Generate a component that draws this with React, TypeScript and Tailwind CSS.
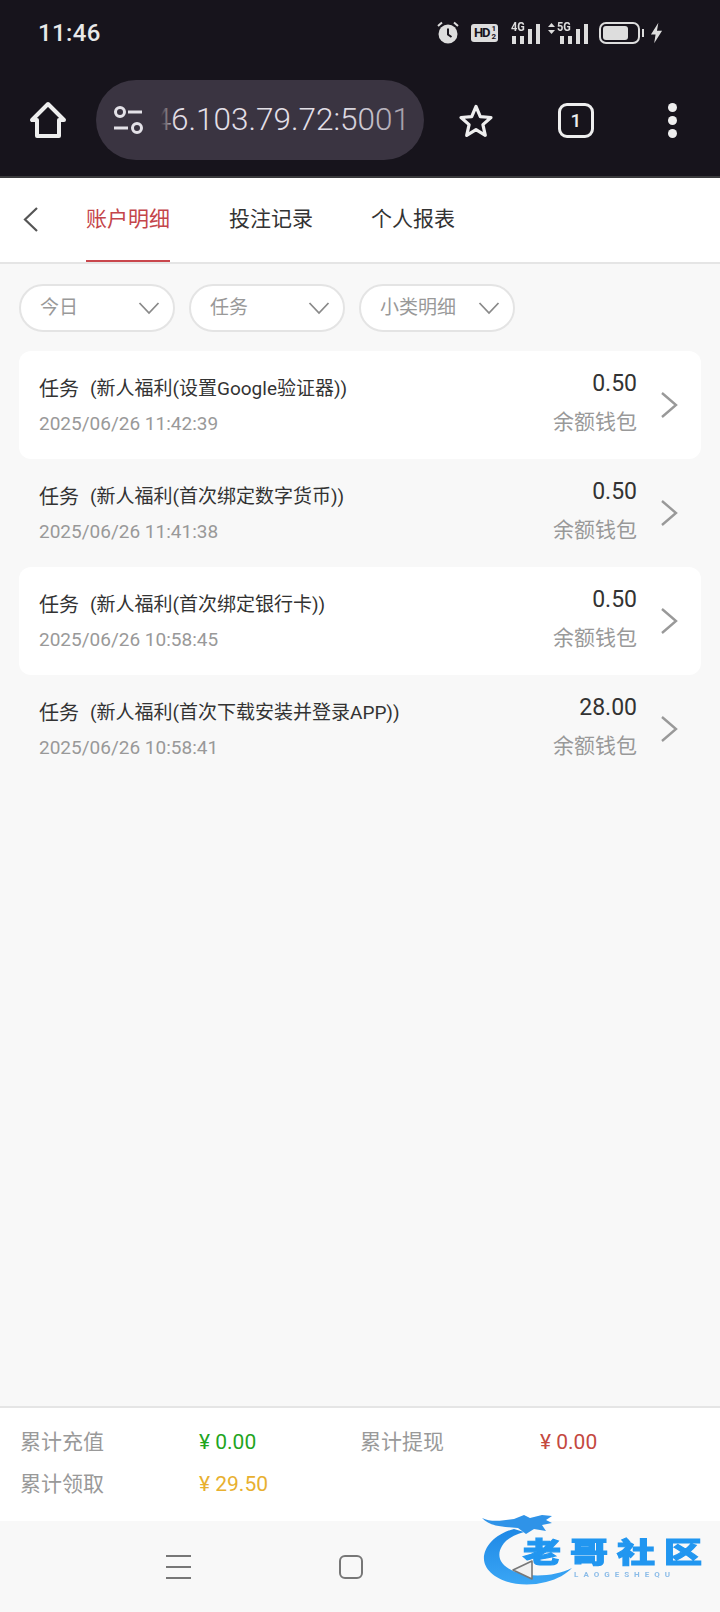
const rows = [
  { sub: "(新人福利(设置Google验证器))", time: "2025/06/26 11:42:39", amount: "0.50", white: true },
  { sub: "(新人福利(首次绑定数字货币))", time: "2025/06/26 11:41:38", amount: "0.50", white: false },
  { sub: "(新人福利(首次绑定银行卡))", time: "2025/06/26 10:58:45", amount: "0.50", white: true },
  { sub: "(新人福利(首次下载安装并登录APP))", time: "2025/06/26 10:58:41", amount: "28.00", white: false },
];

function Signal({ label, arrows }: { label: string; arrows?: boolean }) {
  return (
    <div className={`relative flex h-[32px] items-end gap-[4px] pb-[5px] ${arrows ? "pl-[12px]" : "pl-[1px]"}`}>
      {arrows && (
        <svg width="7" height="11" viewBox="0 0 7 11" className="absolute left-0 top-[6px]">
          <path d="M3.5 0L7 4H0ZM0 7H7L3.5 11Z" fill="#ddd" />
        </svg>
      )}
      <span className={`absolute top-[3px] origin-left scale-x-[0.85] text-[13px] font-bold leading-[13px] text-[#ddd] ${arrows ? "left-[9px]" : "left-0"}`}>
        {label}
      </span>
      <span className="h-[8px] w-[4px] bg-[#ddd]" />
      <span className="h-[8px] w-[4px] bg-[#ddd]" />
      <span className="h-[15px] w-[4px] bg-[#ddd]" />
      <span className="h-[20px] w-[4px] bg-[#ddd]" />
    </div>
  );
}

function StatusBar() {
  return (
    <div className="flex h-[64px] items-center justify-between pl-[38px] pr-[57px] pt-[1px] text-[#e8e8e8]">
      <span className="text-[24px] font-medium leading-none tracking-[0.4px]">11:46</span>
      <div className="flex items-center">
        <svg width="22" height="23" viewBox="0 0 22 23" className="mr-[12px]">
          <circle cx="11" cy="13" r="9.5" fill="#ddd" />
          <path d="M11 7.5V13.5L14.5 16" stroke="#17141c" strokeWidth="2" fill="none" />
          <path d="M1 5L5 1.5M21 5L17 1.5" stroke="#ddd" strokeWidth="2" />
        </svg>
        <div className="mr-[13px] flex h-[18px] w-[27px] items-center justify-center rounded-[3px] bg-[#ddd] pl-[1px] text-[13px] font-bold leading-none tracking-[-1px] text-[#17141c]">
          HD
          <span className="ml-[2px] flex flex-col text-[8px] leading-[8px] tracking-normal">
            <span>1</span>
            <span>2</span>
          </span>
        </div>
        <Signal label="4G" />
        <div className="w-[8px]" />
        <Signal label="5G" arrows />
        <div className="ml-[11px] flex h-[22px] w-[41px] items-center rounded-[7px] border-2 border-[#ddd] px-[2px]">
          <div className="h-[14px] w-[25px] rounded-[3px] bg-[#ddd]" />
        </div>
        <div className="ml-[2px] h-[8px] w-[2px] bg-[#ddd]" />
        <svg width="13" height="24" viewBox="0 0 14 24" className="ml-[6px]">
          <path d="M9 1L1 13.5H6L4.5 23L13 9.5H7.5Z" fill="#ddd" />
        </svg>
      </div>
    </div>
  );
}

function Toolbar() {
  return (
    <div className="flex h-[112px] items-start pt-[16px]">
      <div className="flex h-[80px] w-[96px] items-center justify-center">
        <svg width="38" height="38" viewBox="0 0 38 38" fill="none" stroke="#eee" strokeWidth="4" strokeLinejoin="round">
          <path d="M19 3L3 19H8V35H30V19H35Z" />
        </svg>
      </div>
      <div className="relative flex h-[80px] w-[328px] items-center overflow-hidden rounded-full bg-[#3a3441] pl-[17px]">
        <svg width="32" height="28" viewBox="0 0 32 28" fill="none" stroke="#e4e2e8" strokeWidth="3" className="shrink-0">
          <circle cx="7" cy="6" r="4.5" />
          <path d="M15 6H29M1 22H15" />
          <circle cx="24" cy="22" r="4.5" />
        </svg>
        <div className="relative ml-[16px] w-[249px] overflow-hidden">
          <div className="flex justify-end whitespace-nowrap text-[31.5px] font-light leading-[40px] text-[#e2dfe6]">
            46.103.79.72:5001
          </div>
          <div className="absolute inset-y-0 left-0 w-[14px] bg-gradient-to-r from-[#3a3441] to-transparent" />
          <div className="absolute inset-y-0 right-0 w-[70px] bg-gradient-to-l from-[#3a3441]/40 to-transparent" />
        </div>
      </div>
      <div className="flex h-[80px] w-[104px] items-center justify-center pt-[2px]">
        <svg width="36" height="36" viewBox="0 0 36 36" fill="none" stroke="#eee" strokeWidth="3.2" strokeLinejoin="round">
          <path d="M18 3.5L22.3 13.6L33 14.5L24.9 21.6L27.3 32.3L18 26.6L8.7 32.3L11.1 21.6L3 14.5L13.7 13.6Z" />
        </svg>
      </div>
      <div className="flex h-[80px] w-[96px] items-center justify-center">
        <div className="flex h-[35px] w-[36px] items-center justify-center rounded-[9px] border-[3px] border-[#eee] text-[19px] font-medium leading-none text-[#eee]">
          1
        </div>
      </div>
      <div className="flex h-[80px] w-[96px] flex-col items-center justify-center gap-[4px]">
        <span className="h-[9px] w-[9px] rounded-full bg-[#eee]" />
        <span className="h-[9px] w-[9px] rounded-full bg-[#eee]" />
        <span className="h-[9px] w-[9px] rounded-full bg-[#eee]" />
      </div>
    </div>
  );
}

function Tabs() {
  return (
    <div className="flex h-[86px] items-stretch border-b-2 border-[#e5e5e5] bg-white">
      <div className="flex w-[86px] items-center pb-[1px] pl-[22px]">
        <svg width="17" height="27" viewBox="0 0 17 27" fill="none" stroke="#555" strokeWidth="2.2">
          <path d="M15 2L3 13.5L15 25" />
        </svg>
      </div>
      <div className="relative flex w-[84px] items-center justify-center text-[21px] text-[#c4454a]">
        账户明细
        <div className="absolute bottom-0 left-0 h-[2px] w-full bg-[#c9474c]" />
      </div>
      <div className="ml-[59px] flex w-[84px] items-center justify-center text-[21px] text-[#333]">投注记录</div>
      <div className="ml-[58px] flex w-[84px] items-center justify-center text-[21px] text-[#333]">个人报表</div>
    </div>
  );
}

function Filter({ label }: { label: string }) {
  return (
    <div className="flex h-[48px] w-[156px] items-center justify-between rounded-full border-2 border-[#e4e4e4] bg-white pl-[19px] pr-[13px] text-[19px] text-[#999]">
      <span>{label}</span>
      <svg width="22" height="14" viewBox="0 0 22 14" fill="none" stroke="#8a8a8a" strokeWidth="1.8">
        <path d="M1.5 2L11 12L20.5 2" />
      </svg>
    </div>
  );
}

function Row({ sub, time, amount, white }: { sub: string; time: string; amount: string; white: boolean }) {
  return (
    <div className={`flex h-[108px] items-center rounded-[12px] pl-[20px] pr-[23px] ${white ? "bg-white" : ""}`}>
      <div className="flex-1">
        <div className="flex items-center leading-[28px] text-[#333]">
          <span className="text-[20px]">任务</span>
          <span className="ml-[11px] text-[19px]">{sub}</span>
        </div>
        <div className="mt-[9px] text-[19px] leading-[24px] text-[#999]">{time}</div>
      </div>
      <div className="pb-[4px] text-right">
        <div className="pb-[2px] text-[23px] leading-[28px] text-[#333]">{amount}</div>
        <div className="mt-[8px] text-[21px] leading-[28px] text-[#999]">余额钱包</div>
      </div>
      <svg width="18" height="28" viewBox="0 0 18 28" fill="none" stroke="#999" strokeWidth="2.4" className="ml-[23px]">
        <path d="M2 2L16 14L2 26" />
      </svg>
    </div>
  );
}

function Footer() {
  return (
    <div className="h-[115px] border-t-2 border-[#e5e5e5] bg-white pl-[20px] pt-[13px] text-[21px] leading-[42px]">
      <div className="flex">
        <span className="w-[179px] text-[#999]">累计充值</span>
        <span className="w-[161px] text-[#1fa51f]">¥ 0.00</span>
        <span className="w-[180px] text-[#999]">累计提现</span>
        <span className="text-[#c4493f]">¥ 0.00</span>
      </div>
      <div className="flex">
        <span className="w-[179px] text-[#999]">累计领取</span>
        <span className="text-[#e8b030]">¥ 29.50</span>
      </div>
    </div>
  );
}

function Watermark() {
  return (
    <div className="pointer-events-none absolute left-[480px] top-[1512px] h-[80px] w-[236px] blur-[0.6px]">
      <svg width="100" height="76" viewBox="0 0 100 76" className="absolute left-0 top-0">
        <defs>
          <linearGradient id="ring" x1="0" y1="0" x2="0" y2="1">
            <stop offset="0" stopColor="#1e88e5" />
            <stop offset="1" stopColor="#3aa6f5" />
          </linearGradient>
        </defs>
        <path d="M34 17C14 22 3 36 4 48C6 66 36 78 66 70C78 67 86 62 92 56C76 64 52 66 36 60C20 54 16 44 22 34C26 27 34 23 44 20Z" fill="url(#ring)" />
        <path d="M2 6C12 11 24 8 34 7L44 3L50 6L62 3L72 4L66 8L72 11L62 13L66 19L54 17L46 22L38 16C26 15 10 15 2 6Z" fill="#2f93e8" />
      </svg>
      <div className="absolute left-[43px] top-[19px] scale-y-75 whitespace-nowrap text-[38px] font-black leading-[44px] tracking-[9px] text-[#2196f0] [-webkit-text-stroke:1.5px_#2196f0]">
        老哥社区
      </div>
      <div className="absolute left-[94px] top-[58px] whitespace-nowrap text-[8px] font-bold leading-[10px] tracking-[5px] text-[#8cbce8]">
        LAOGESHEQU
      </div>
    </div>
  );
}

function NavBar() {
  return (
    <div className="relative flex h-[91px] items-center bg-[#f8f8f8]">
      <div className="ml-[166px] flex w-[25px] flex-col gap-[9px]">
        <span className="h-[2px] bg-[#777]" />
        <span className="h-[2px] bg-[#777]" />
        <span className="h-[2px] bg-[#777]" />
      </div>
      <div className="ml-[148px] h-[24px] w-[24px] rounded-[6px] border-2 border-[#777]" />
    </div>
  );
}

export default function App() {
  return (
    <div
      className="relative flex h-[1612px] w-[720px] flex-col overflow-hidden bg-[#f8f8f8]"
      style={{ fontFamily: 'Roboto, "Noto Sans CJK SC", sans-serif' }}
    >
      <div className="h-[178px] border-b-2 border-[#3a3a3c] bg-[#17141c]">
        <StatusBar />
        <Toolbar />
      </div>
      <Tabs />
      <div className="flex-1 px-[19px] pt-[20px]">
        <div className="flex gap-[14px]">
          <Filter label="今日" />
          <Filter label="任务" />
          <Filter label="小类明细" />
        </div>
        <div className="mt-[19px]">
          {rows.map((row) => (
            <Row key={row.time} {...row} />
          ))}
        </div>
      </div>
      <Footer />
      <NavBar />
      <Watermark />
      <svg width="24" height="22" viewBox="0 0 24 22" fill="#f1f1f1" stroke="#777" strokeWidth="1.6" strokeLinejoin="round" className="absolute left-[511px] top-[1559px]">
        <path d="M21 2L2 11L21 20Z" />
      </svg>
    </div>
  );
}
